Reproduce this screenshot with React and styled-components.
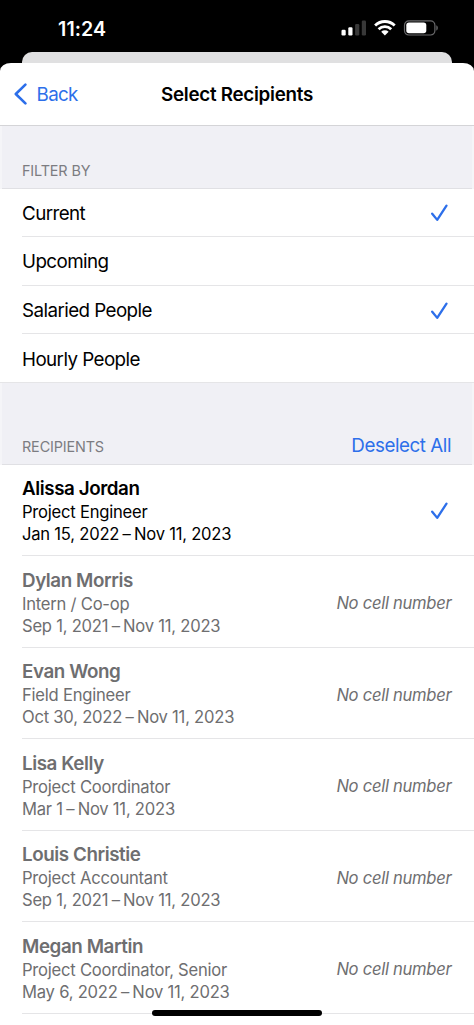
import React from "react";
import styled, { createGlobalStyle } from "styled-components";

const GlobalStyle = createGlobalStyle`
  * { box-sizing: border-box; }
  body { margin: 0; background: #000; font-family: Inter, "Liberation Sans", sans-serif; }
`;

const BLUE = "#2d6fea";

const Screen = styled.div`
  position: relative;
  width: 474px;
  height: 1025px;
  overflow: hidden;
  display: flex;
  flex-direction: column;
  background: #000;
  color: #000;
`;

const StatusBar = styled.header`
  flex: none;
  height: 52px;
  padding: 4px 36px 0 58px;
  display: flex;
  align-items: center;
  justify-content: space-between;
  color: #fff;
`;

const Clock = styled.span`
  font-size: 19.6px;
  line-height: 24px;
  font-weight: 600;
  letter-spacing: 0.1px;
  padding-top: 1px;
`;

const StatusIcons = styled.svg`
  display: block;
`;

const SheetBehind = styled.div`
  flex: none;
  height: 11px;
  margin: 0 22px;
  border-radius: 10px 10px 0 0;
  background: #e0e0e1;
`;

const Sheet = styled.main`
  flex: 1;
  min-height: 0;
  overflow: hidden;
  border-radius: 11px 11px 0 0 / 8px 8px 0 0;
  background: #fff;
`;

const NavBar = styled.nav`
  height: 63px;
  padding: 0 14px;
  display: grid;
  grid-template-columns: 1fr auto 1fr;
  align-items: center;
  border-bottom: 1px solid #d4d4d7;
`;

const BackButton = styled.button`
  display: flex;
  align-items: center;
  gap: 9.5px;
  padding: 0;
  border: 0;
  background: none;
  color: ${BLUE};
  font: inherit;
  font-size: 18.8px;
  letter-spacing: -0.65px;
`;

const Title = styled.h1`
  margin: 0;
  font-size: 18.8px;
  font-weight: 600;
  letter-spacing: -0.27px;
`;

const SectionHeader = styled.div`
  height: ${(p) => p.$height}px;
  padding: 0 21px 8px 20px;
  display: flex;
  align-items: flex-end;
  justify-content: space-between;
  background: #f0f0f5;
  border: solid #f5f5f8;
  border-width: 0 2px;
  box-shadow: inset 0 -1px #e0e0e4;
`;

const SectionLabel = styled.h2`
  margin: 0 0 1px;
  font-size: 14.4px;
  line-height: 18px;
  font-weight: 400;
  letter-spacing: -0.14px;
  color: #7c7c81;
`;

const TextButton = styled.button`
  padding: 0;
  border: 0;
  background: none;
  color: ${BLUE};
  font: inherit;
  font-size: 18.8px;
  line-height: 22px;
  letter-spacing: -0.45px;
`;

const List = styled.ul`
  margin: 0;
  padding: 0 0 0 22px;
  list-style: none;
`;

const FilterRow = styled.li`
  height: 48.6px;
  padding: 2px 26px 0 0;
  display: flex;
  align-items: center;
  justify-content: space-between;
  border-bottom: 1px solid #e5e5e7;
  font-size: 18.8px;
  letter-spacing: -0.57px;
  &:last-child { margin-left: -22px; padding-left: 22px; }
`;

const RecipientRow = styled.li`
  height: 91.5px;
  padding: 0 ${(p) => (p.$active ? 26 : 22.5)}px 0 0;
  display: flex;
  align-items: center;
  justify-content: space-between;
  border-bottom: 1px solid #e5e5e7;
  color: ${(p) => (p.$active ? "#000" : "#6e6e70")};
`;

const Person = styled.div`
  display: flex;
  flex-direction: column;
  padding-top: 0.9px;
`;

const Name = styled.span`
  font-size: 18.8px;
  line-height: 25px;
  font-weight: 600;
  letter-spacing: -0.42px;
`;

const Detail = styled.span`
  font-size: 16.6px;
  line-height: 22px;
  letter-spacing: -0.23px;
`;

const Dash = styled.span`
  margin: 0 2.1px;
`;

const Note = styled.span`
  padding-top: 3.4px;
  font-size: 16.6px;
  font-style: italic;
  letter-spacing: -0.28px;
`;

const HomeIndicator = styled.div`
  position: absolute;
  left: 152px;
  bottom: 9px;
  width: 170px;
  height: 6px;
  border-radius: 3px;
  background: #000;
`;

const CheckIcon = styled.svg`
  display: block;
  margin-top: ${(p) => p.$drop || 0}px;
`;

const Check = ({ drop }) => (
  <CheckIcon $drop={drop} width="17" height="18" viewBox="0 0 17 18" fill="none" stroke={BLUE} strokeWidth="2.3" strokeLinecap="round" strokeLinejoin="round">
    <path d="M1.2 9.7 6.2 15.9 15.5 1.6" />
  </CheckIcon>
);

const filters = [
  ["Current", true],
  ["Upcoming", false],
  ["Salaried People", true],
  ["Hourly People", false],
];

const recipients = [
  ["Alissa Jordan", "Project Engineer", "Jan 15, 2022", "Nov 11, 2023", true],
  ["Dylan Morris", "Intern / Co-op", "Sep 1, 2021", "Nov 11, 2023"],
  ["Evan Wong", "Field Engineer", "Oct 30, 2022", "Nov 11, 2023"],
  ["Lisa Kelly", "Project Coordinator", "Mar 1", "Nov 11, 2023"],
  ["Louis Christie", "Project Accountant", "Sep 1, 2021", "Nov 11, 2023"],
  ["Megan Martin", "Project Coordinator, Senior", "May 6, 2022", "Nov 11, 2023"],
];

export default function App() {
  return (
    <Screen>
      <GlobalStyle />
      <StatusBar>
        <Clock>11:24</Clock>
        <StatusIcons width="98" height="18" viewBox="0 0 98 18">
          <g fill="#fff">
            <rect x="1.5" y="10.8" width="4.2" height="5.6" rx="1.2" />
            <rect x="8.3" y="8.3" width="4.2" height="8.1" rx="1.2" />
            <rect x="15.1" y="5" width="4.2" height="11.4" rx="1.2" opacity="0.22" />
            <rect x="21.8" y="1.6" width="4.2" height="14.8" rx="1.2" opacity="0.22" />
          </g>
          <g fill="none" stroke="#fff" strokeWidth="2.8">
            <path d="M35.1 6.5a14 14 0 0 1 19.6 0" />
            <path d="M38.6 10.2a9 9 0 0 1 12.6 0" />
          </g>
          <path d="M41.2 12.8a5.4 5.4 0 0 1 7.4 0L44.9 16.4Z" fill="#fff" />
          <rect x="64.5" y="1.8" width="30.4" height="14.2" rx="4.4" fill="none" stroke="#69696b" strokeWidth="1.2" />
          <rect x="66.3" y="3.6" width="20" height="10.6" rx="2.7" fill="#fff" />
          <path d="M96.3 6.3c2 .8 2 4.4 0 5.2Z" fill="#69696b" />
        </StatusIcons>
      </StatusBar>
      <SheetBehind />
      <Sheet>
        <NavBar>
          <BackButton>
            <svg width="13" height="22" viewBox="0 0 13 22" fill="none" stroke={BLUE} strokeWidth="2.6" strokeLinecap="round" strokeLinejoin="round">
              <path d="M11.4 1.6 1.8 11l9.6 9.4" />
            </svg>
            Back
          </BackButton>
          <Title>Select Recipients</Title>
        </NavBar>
        <SectionHeader $height={62.6}>
          <SectionLabel>FILTER BY</SectionLabel>
        </SectionHeader>
        <List>
          {filters.map(([label, checked]) => (
            <FilterRow key={label}>
              {label}
              {checked && <Check />}
            </FilterRow>
          ))}
        </List>
        <SectionHeader $height={82}>
          <SectionLabel>RECIPIENTS</SectionLabel>
          <TextButton>Deselect All</TextButton>
        </SectionHeader>
        <List>
          {recipients.map(([name, role, from, to, active]) => (
            <RecipientRow key={name} $active={active}>
              <Person>
                <Name>{name}</Name>
                <Detail>{role}</Detail>
                <Detail>{from}<Dash>&#8202;–&#8202;</Dash>{to}</Detail>
              </Person>
              {active ? <Check drop={2} /> : <Note>No cell number</Note>}
            </RecipientRow>
          ))}
        </List>
      </Sheet>
      <HomeIndicator />
    </Screen>
  );
}
